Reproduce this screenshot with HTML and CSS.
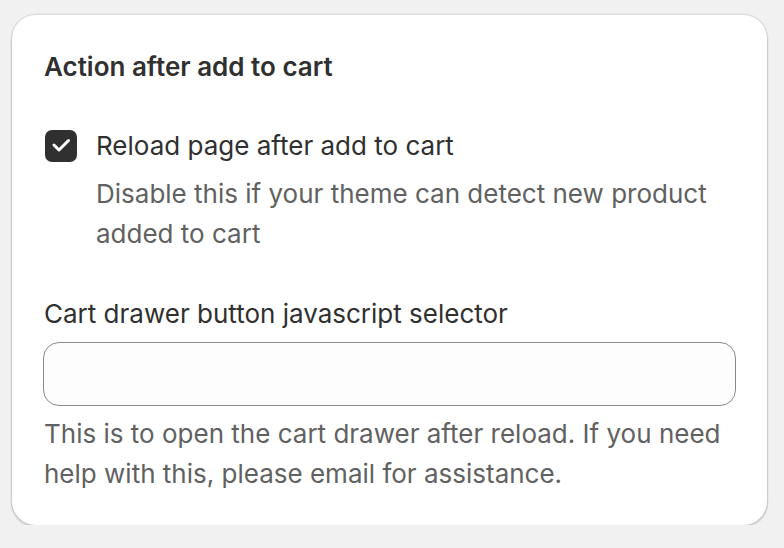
FILE: index.html
```
<!DOCTYPE html>
<html lang="en">

<head>
  <meta charset="UTF-8" />
  <title>Action after add to cart</title>
  <link rel="stylesheet" href="styles.css">
</head>

<body>
  <!-- settings card -->
  <section class="card">
    <h2 class="card-title">Action after add to cart</h2>

    <!-- checkbox option -->
    <label class="choice">
      <span class="box">
        <svg viewBox="0 0 32 32" width="32" height="32" aria-hidden="true">
          <path d="M9 15l5 5 9.5-9.5" fill="none" stroke="#fff" stroke-width="3" stroke-linecap="round" stroke-linejoin="round" />
        </svg>
      </span>
      <span class="choice-label">Reload page after add to cart</span>
    </label>
    <p class="help help-indent">Disable this if your theme can detect new product added to cart</p>

    <!-- text field -->
    <div class="field">
      <label class="field-label" for="selector">Cart drawer button javascript selector</label>
      <input class="field-input" id="selector" type="text">
      <p class="help">This is to open the cart drawer after reload. If you need help with this, please email for assistance.</p>
    </div>
  </section>
</body>

</html>
```

FILE: styles.css
```
/* reset */
html,
body,
h2,
p {
  margin: 0;
  padding: 0;
}

body {
  padding: 15px 17px 0 12px;
  background-color: #f1f1f1;
  font-family: Inter, "Noto Sans", sans-serif;
  font-size: 26px;
  line-height: 40px;
  color: #303030;
}

/* card box */
.card {
  padding: 32px 32px 31px;
  background-color: #fff;
  border-radius: 24px;
  box-shadow: 0 0 0 1.5px rgba(0, 0, 0, .08), 0 2px 0 1px rgba(0, 0, 0, .08);
}

.card-title {
  font-size: 26px;
  font-weight: 600;
  line-height: 40px;
}

/* checkbox */
.choice {
  display: flex;
  align-items: center;
  margin-top: 39px;
}

.box {
  display: flex;
  width: 32px;
  height: 32px;
  margin-left: 1px;
  border-radius: 7px;
  background-color: #303030;
}

.choice-label {
  margin-left: 19px;
}

/* help texts */
.help {
  margin-top: 8px;
  color: #616161;
}

.help-indent {
  padding-left: 52px;
}

/* text field */
.field {
  margin-top: 40px;
}

.field-label {
  display: block;
}

.field-input {
  display: block;
  width: calc(100% + 2px);
  height: 64px;
  margin: 8px 0 0 -1px;
  box-sizing: border-box;
  border: 1.5px solid #8a8a8a;
  border-radius: 16px;
  background-color: #fdfdfd;
  font: inherit;
  padding: 0 24px;
}
```
